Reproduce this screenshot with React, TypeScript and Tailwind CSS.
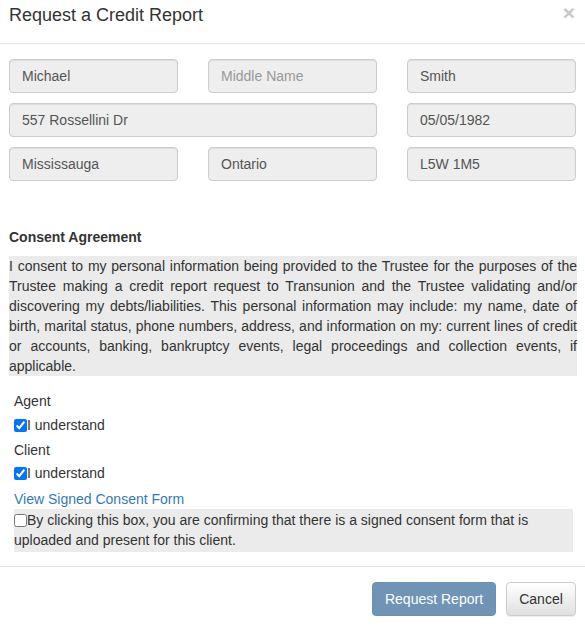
import React from 'react';

// Request a Credit Report modal (bootstrap 3 look)

const FIELD =
  'h-[34px] w-full rounded-[4px] border border-[#ccc] bg-[#eee] px-3 text-[14px] text-[#555] shadow-[inset_0_1px_1px_rgba(0,0,0,0.075)] outline-none placeholder:text-[#999]';

const Field = ({ value, placeholder, className = '' }: { value?: string; placeholder?: string; className?: string }) => (
  <input className={`${FIELD} ${className}`} defaultValue={value} placeholder={placeholder} disabled />
);

const CONSENT =
  'I consent to my personal information being provided to the Trustee for the purposes of the Trustee making a credit report request to Transunion and the Trustee validating and/or discovering my debts/liabilities. This personal information may include: my name, date of birth, marital status, phone numbers, address, and information on my: current lines of credit or accounts, banking, bankruptcy events, legal proceedings and collection events, if applicable.';

export default function App() {
  return (
    <div className="min-h-[627px] w-[585px] bg-white text-[14px] leading-[20px] text-[#333]" style={{ fontFamily: '"Liberation Sans", Arial, sans-serif' }}>
      {/* header */}
      <div className="flex items-start justify-between border-b border-[#e5e5e5] pl-[9px] pr-[10px] pt-[2px] pb-[15px]">
        <h4 className="text-[18px] leading-[26px] text-[#333]">Request a Credit Report</h4>
        <button type="button" className="mt-[-2px] text-[21px] font-bold leading-[26px] text-[#c8c8c8]">×</button>
      </div>

      {/* body */}
      <div className="px-[9px] pt-[15px]">
        <div className="grid grid-cols-3 gap-x-[30px] gap-y-[10px]">
          <Field value="Michael" />
          <Field placeholder="Middle Name" />
          <Field value="Smith" />
          <Field value="557 Rossellini Dr" className="col-span-2" />
          <Field value="05/05/1982" />
          <Field value="Mississauga" />
          <Field value="Ontario" />
          <Field value="L5W 1M5" />
        </div>

        <div className="mt-[46px] font-bold">Consent Agreement</div>
        <p className="mt-[9px] w-[568px] bg-[#ebebeb] text-justify">{CONSENT}</p>

        <div className="pl-[5px] pt-[15px]">
          <div>Agent</div>
          <label className="mt-[4px] flex items-center">
            <input type="checkbox" defaultChecked className="m-0 h-[13px] w-[13px]" />
            <span>I understand</span>
          </label>
          <div className="mt-[5px]">Client</div>
          <label className="mt-[3px] flex items-center">
            <input type="checkbox" defaultChecked className="m-0 h-[13px] w-[13px]" />
            <span>I understand</span>
          </label>
          <a href="#" className="mt-[6px] block text-[#337ab7]">View Signed Consent Form</a>
          <label className="block w-[559px] bg-[#ebebeb] pt-[1px] pb-[2px] pr-[4px]">
            <input type="checkbox" className="m-0 h-[13px] w-[13px] align-[-2px]" />
            By clicking this box, you are confirming that there is a signed consent form that is uploaded and present for this client.
          </label>
        </div>
      </div>

      {/* footer */}
      <div className="mt-[14px] flex justify-end gap-[10px] border-t border-[#e5e5e5] pt-[15px] pr-[9px]">
        <button type="button" disabled className="h-[34px] w-[124px] rounded-[4px] border border-[#6a90b2] bg-[#6f94b6] text-[14px] text-white">
          Request Report
        </button>
        <button type="button" className="h-[34px] w-[70px] rounded-[4px] border border-[#ccc] bg-gradient-to-b from-white to-[#e0e0e0] text-[14px] text-[#333] shadow-[inset_0_1px_0_rgba(255,255,255,0.15),0_1px_1px_rgba(0,0,0,0.075)]">
          Cancel
        </button>
      </div>
    </div>
  );
}
